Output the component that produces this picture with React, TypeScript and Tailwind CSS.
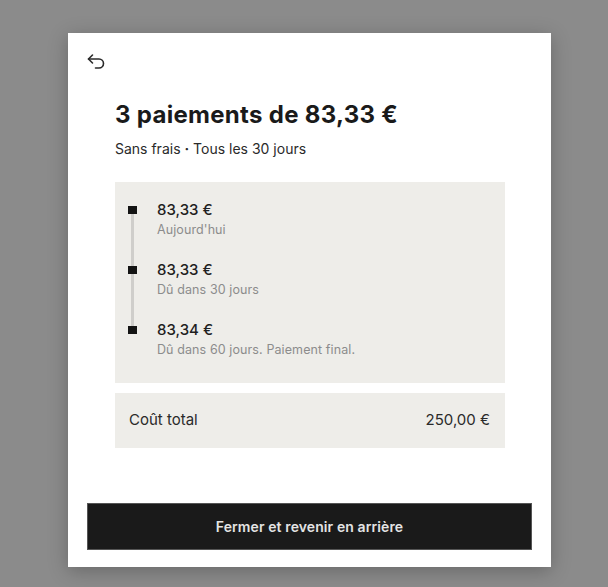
import React from "react";

const rows = [
  { amount: "83,33 €", label: "Aujourd'hui" },
  { amount: "83,33 €", label: "Dû dans 30 jours" },
  { amount: "83,34 €", label: "Dû dans 60 jours. Paiement final." },
];

export default function App() {
  return (
    <div
      className="w-[608px] h-[587px] bg-[#8b8b8b] pt-[33px] pl-[68px]"
      style={{ fontFamily: "Inter, 'Noto Sans', sans-serif" }}
    >
      <div className="w-[483px] h-[534px] bg-white flex flex-col shadow-[0_4px_18px_rgba(0,0,0,0.25)]">
        <div className="pt-[19px] pl-[19px]">
          <svg width="18" height="18" viewBox="0 0 18 18" fill="none" stroke="#2a2a2a" strokeWidth="1.6" strokeLinecap="round" strokeLinejoin="round">
            <path d="M5.5 3 L1.5 7 L5.5 11" />
            <path d="M1.5 7 H12 a4.5 4.5 0 0 1 0 9 H8.5" />
          </svg>
        </div>
        <div className="pl-[47px] pr-[46px] mt-[29px]">
          <h1 className="text-[24px] leading-[32px] font-bold text-[#1a1a1a] tracking-[0.3px]">
            3 paiements de 83,33 €
          </h1>
          <p className="mt-[8px] text-[14px] leading-[20px] text-[#2a2a2a]">
            Sans frais <span className="font-bold">·</span> Tous les 30 jours
          </p>
          <div className="mt-[23px] bg-[#eeede9] pl-[13px] pt-[18px] pb-[25px]">
            <div className="relative">
              <div className="absolute left-[3px] top-[10px] w-[3px] h-[120px] bg-[#cfcecb]" />
              <div className="flex flex-col gap-[22px]">
                {rows.map((r, i) => (
                  <div key={i} className="flex relative">
                    <div className="w-[9px] h-[8px] bg-[#141414] mt-[6px] shrink-0" />
                    <div className="ml-[20px]">
                      <div className="text-[15px] leading-[20px] font-medium text-[#1f1f1f]">{r.amount}</div>
                      <div className="text-[12.5px] leading-[16px] text-[#8c8c8c] mt-[2px] tracking-[0.1px]">{r.label}</div>
                    </div>
                  </div>
                ))}
              </div>
            </div>
          </div>
          <div className="mt-[10px] bg-[#eeede9] h-[55px] flex items-center justify-between pl-[14px] pr-[15px] text-[15px] text-[#2a2a2a]">
            <span>Coût total</span>
            <span>250,00 €</span>
          </div>
        </div>
        <button className="mt-auto mx-[19px] mb-[17px] h-[47px] bg-[#1a1a1a] border border-[#555] text-[#e4e4e4] text-[14px] tracking-[0.1px] font-semibold">
          Fermer et revenir en arrière
        </button>
      </div>
    </div>
  );
}
